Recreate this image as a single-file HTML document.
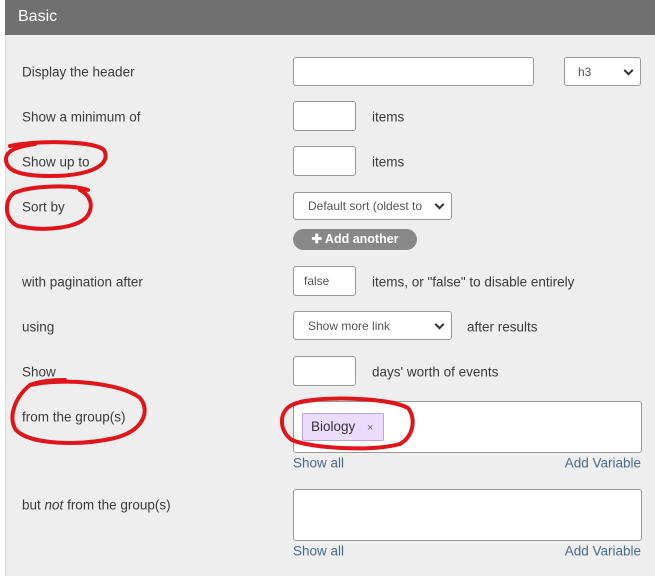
<!DOCTYPE html>
<html><head><style>
body{margin:0;width:655px;height:576px;overflow:hidden;background:#fff;font-family:"Liberation Sans",sans-serif;position:relative}
.hd{position:absolute;left:5px;top:0;width:650px;height:35px;background:#707070;color:#fff;font-size:16px;line-height:33px;padding-left:13px;box-sizing:border-box}
.bg{position:absolute;left:5px;top:35px;width:650px;height:541px;background:#eeeeee;border-left:1px solid #ddd}
.l{position:absolute;left:22px;font-size:13.5px;color:#3a3a3a;transform:translateY(-50%)}
.t{position:absolute;font-size:13.5px;color:#3a3a3a;transform:translateY(-50%)}
.in{position:absolute;background:#fff;border:1px solid #999;border-radius:3px;box-sizing:border-box;font-size:12px;color:#555}
.sel:after{content:"";position:absolute;right:8px;top:50%;width:5px;height:5px;border-right:2px solid #333;border-bottom:2px solid #333;transform:translateY(-70%) rotate(45deg)}
.lk{position:absolute;font-size:13.5px;color:#4a6a8c;transform:translateY(-50%)}
</style></head><body>
<div class="hd">Basic</div>
<div class="bg"></div>
<div class="l" style="top:72px">Display the header</div>
<div class="l" style="top:117px">Show a minimum of</div>
<div class="l" style="top:162px">Show up to</div>
<div class="l" style="top:207px">Sort by</div>
<div class="l" style="top:282px">with pagination after</div>
<div class="l" style="top:327px">using</div>
<div class="l" style="top:372px">Show</div>
<div class="l" style="top:417px">from the group(s)</div>
<div class="l" style="top:505px">but <i>not</i> from the group(s)</div>

<div class="in" style="left:293px;top:57px;width:241px;height:29px"></div>
<div class="in sel" style="left:564px;top:57px;width:77px;height:29px;padding:7px 0 0 13px">h3</div>
<div class="in" style="left:293px;top:101px;width:63px;height:30px"></div>
<div class="t" style="left:372px;top:117px">items</div>
<div class="in" style="left:293px;top:146px;width:63px;height:30px"></div>
<div class="t" style="left:372px;top:162px">items</div>
<div class="in sel" style="left:293px;top:192px;width:159px;height:28px;padding:6px 0 0 14px">Default sort (oldest to</div>
<div style="position:absolute;left:293px;top:229px;width:124px;height:21px;border-radius:11px;background:#888;color:#fff;font-size:12.5px;font-weight:bold;line-height:21px;text-align:center">✚ Add another</div>
<div class="in" style="left:293px;top:266px;width:63px;height:30px;padding:7px 0 0 10px">false</div>
<div class="t" style="left:372px;top:282px">items, or "false" to disable entirely</div>
<div class="in sel" style="left:293px;top:311px;width:159px;height:29px;padding:7px 0 0 14px">Show more link</div>
<div class="t" style="left:467px;top:327px">after results</div>
<div class="in" style="left:293px;top:356px;width:63px;height:30px"></div>
<div class="t" style="left:372px;top:372px">days' worth of events</div>
<div class="in" style="left:293px;top:401px;width:349px;height:52px"></div>
<div style="position:absolute;left:302px;top:413px;width:82px;height:28px;box-sizing:border-box;background:#eadcfc;border:1px solid #b8a6d4;border-radius:2px;font-size:13.5px;color:#333;line-height:26px;padding-left:8px">Biology <span style="font-size:11px;color:#666;margin-left:8px">×</span></div>
<div class="lk" style="left:293px;top:463px">Show all</div>
<div class="lk" style="right:14px;top:463px">Add Variable</div>
<div class="in" style="left:293px;top:489px;width:349px;height:52px"></div>
<div class="lk" style="left:293px;top:551px">Show all</div>
<div class="lk" style="right:14px;top:551px">Add Variable</div>

<svg style="position:absolute;left:0;top:0" width="655" height="576" fill="none" stroke="#e0151b" stroke-width="4" stroke-linecap="round">
<path d="M10 146 C40 140 95 141 104 150 C112 165 90 176 50 176 C18 176 5 170 6 158 C7 150 20 146 35 144"/>
<path d="M88 190 C70 184 30 186 14 193 C4 200 4 220 18 226 C45 232 80 228 88 215 C94 205 90 195 80 190"/>
<path d="M30 385 C60 378 120 382 140 398 C150 410 145 430 115 438 C80 446 30 445 16 430 C8 418 14 398 30 385 C40 381 55 380 65 380"/>
<path d="M300 402 C330 396 390 398 408 408 C416 418 414 436 400 444 C370 452 310 448 292 440 C280 432 278 414 290 406 C295 403 305 401 315 400"/>
</svg>
</body></html>
